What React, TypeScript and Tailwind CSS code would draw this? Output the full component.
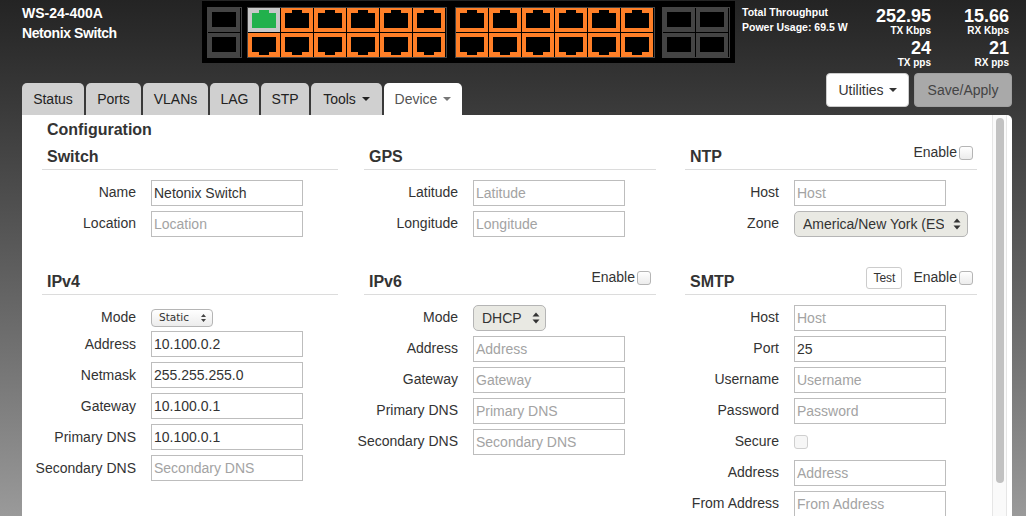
import React from 'react';

const ORANGE = '#ff7f27';
const GREEN = '#22b14c';

function Port({ bottom, active }: { bottom?: boolean; active?: boolean }) {
  const pts = bottom
    ? '4,4 28,4 28,19 21,19 21,22 11,22 11,19 4,19'
    : '4,5 11,5 11,2 21,2 21,5 28,5 28,20 4,20';
  return (
    <svg width="33" height="24" viewBox="0 0 33 24" className="block">
      <rect x="0" y="0" width="32" height="24" fill={active ? '#c8c8c8' : ORANGE} />
      <polygon points={pts} fill={active ? GREEN : '#000'} />
    </svg>
  );
}

function Sfp() {
  return (
    <svg width="33" height="24" viewBox="0 0 33 24" className="block">
      <rect x="0" y="0" width="32" height="24" fill="#444" />
      <rect x="4" y="4" width="24" height="15" fill="#000" />
    </svg>
  );
}

function PortGroup({ count, first, kind }: { count: number; first?: boolean; kind: 'rj' | 'sfp' }) {
  const idx = Array.from({ length: count }, (_, i) => i);
  return (
    <div className="border border-[#444] flex flex-col gap-px">
      <div className="flex">
        {idx.map((i) => (kind === 'sfp' ? <Sfp key={i} /> : <Port key={i} active={first && i === 0} />))}
      </div>
      <div className="flex">
        {idx.map((i) => (kind === 'sfp' ? <Sfp key={i} /> : <Port key={i} bottom />))}
      </div>
    </div>
  );
}

function Field({ label, value, placeholder, flat }: { label: string; value?: string; placeholder?: string; flat?: boolean }) {
  return (
    <Row label={label} flat={flat}>
      <div className={`h-[26px] w-[152px] border border-[#bdbdbd] bg-white px-[2px] leading-[25px] text-[14px] whitespace-nowrap overflow-hidden ${value ? 'text-[#333]' : 'text-[#a3a3a3]'}`}>
        {value ?? placeholder}
      </div>
    </Row>
  );
}

function Row({ label, children, cls = 'mb-[5px]', flat }: { label: string; children: React.ReactNode; cls?: string; flat?: boolean }) {
  return (
    <div className={`flex items-center ${cls}`}>
      <div className={`w-[94px] flex justify-end whitespace-nowrap text-[14px] text-[#333] ${flat ? '' : '-translate-y-px'}`}>{label}</div>
      <div className="ml-[15px]">{children}</div>
    </div>
  );
}

function Enable({ cls = '' }: { cls?: string }) {
  return (
    <div className={`flex items-center gap-[2px] text-[14px] text-[#333] ${cls}`}>
      <span>Enable</span>
      <span className="w-[14px] h-[14px] rounded-[3px] border border-[#b5b5b5] bg-gradient-to-b from-[#ffffff] to-[#ececec]" />
    </div>
  );
}

function Section({ title, right, cls = '', children }: { title: string; right?: React.ReactNode; cls?: string; children: React.ReactNode }) {
  return (
    <div className={`min-w-0 ${cls}`}>
      <div className="h-[29px] border-b border-[#dcdcdc] flex justify-between pr-[4px]">
        <span className="ml-[5px] text-[16px] font-bold text-[#333] leading-[25px] pt-[3px]">{title}</span>
        {right && <div className="flex items-start gap-[11px] mt-[1px]">{right}</div>}
      </div>
      <div className="pt-[10px]">{children}</div>
    </div>
  );
}

function Tab({ label, caret, active, w }: { label: string; caret?: boolean; active?: boolean; w: string }) {
  return (
    <div className={`${w} h-[32px] rounded-t-[5px] flex items-center justify-center gap-[6px] text-[14px] ${active ? 'bg-white text-[#555]' : 'bg-[#d0d0d0] text-[#222]'}`}>
      <span>{label}</span>
      {caret && <span className={`w-0 h-0 border-x-[4px] border-x-transparent border-t-[4px] ${active ? 'border-t-[#777]' : 'border-t-[#222]'}`} />}
    </div>
  );
}

function Stat({ value, unit, w }: { value: string; unit: string; w: string }) {
  return (
    <div className={`${w} text-right text-white`}>
      <div className="text-[18px] font-bold leading-[17px]">{value}</div>
      <div className="text-[10px] leading-[12px] font-bold">{unit}</div>
    </div>
  );
}

export default function App() {
  return (
    <div className="h-[516px] w-[1026px] overflow-hidden bg-gradient-to-b from-[#242424] to-[#9a9a9a] font-['Liberation_Sans',Arial,sans-serif]">
      <div className="h-[73px] flex items-start">
        <div className="w-[202px] pl-[22px] pt-[3px] text-white text-[14px] font-bold">
          <div className="leading-[20px]">WS-24-400A</div>
          <div className="leading-[20px] tracking-[-0.4px]">Netonix Switch</div>
        </div>
        <div className="mt-px h-[62px] w-[533px] bg-black pt-[6px] pl-[5px] flex items-start">
          <PortGroup count={1} kind="sfp" />
          <div className="ml-[5px]"><PortGroup count={6} kind="rj" first /></div>
          <div className="ml-[8px]"><PortGroup count={6} kind="rj" /></div>
          <div className="ml-[7px]"><PortGroup count={2} kind="sfp" /></div>
        </div>
        <div className="ml-[7px] pt-[5px] w-[127px] text-white text-[10.5px] font-bold">
          <div className="leading-[15px]">Total Throughput</div>
          <div className="leading-[15px]">Power Usage: 69.5 W</div>
        </div>
        <div className="pt-[8px] ml-[2px] flex flex-col">
          <div className="flex">
            <Stat value="252.95" unit="TX Kbps" w="w-[60px]" />
            <Stat value="15.66" unit="RX Kbps" w="w-[78px]" />
          </div>
          <div className="flex mt-[3px]">
            <Stat value="24" unit="TX pps" w="w-[60px]" />
            <Stat value="21" unit="RX pps" w="w-[78px]" />
          </div>
        </div>
      </div>

      <div className="h-[42px] flex items-start pl-[22px] pr-[14px]">
        <div className="mt-[10px] flex gap-[2px]">
          <Tab label="Status" w="w-[62px]" />
          <Tab label="Ports" w="w-[55px]" />
          <Tab label="VLANs" w="w-[65px]" />
          <Tab label="LAG" w="w-[49px]" />
          <Tab label="STP" w="w-[48px]" />
          <Tab label="Tools" caret w="w-[71px]" />
          <Tab label="Device" caret active w="w-[78px]" />
        </div>
        <div className="ml-auto flex gap-[5px]">
          <div className="w-[83px] h-[34px] rounded-[4px] bg-white border border-[#ccc] text-[#333] text-[14px] flex items-center justify-center gap-[5px]">
            <span>Utilities</span>
            <span className="w-0 h-0 border-x-[4px] border-x-transparent border-t-[4px] border-t-[#333]" />
          </div>
          <div className="w-[98px] h-[34px] rounded-[4px] bg-[#a9a9a9] border border-[#a0a0a0] text-[#444] text-[14px] flex items-center justify-center">Save/Apply</div>
        </div>
      </div>

      <div className="ml-[22px] w-[990px] h-[401px] bg-white rounded-tr-[5px] flex overflow-hidden">
        <div className="w-[970px] pl-[20px] flex-none">
          <div className="pl-[5px] pt-[5px] text-[16px] font-bold text-[#333] leading-[20px] h-[25px]">Configuration</div>
          <div className="grid grid-cols-[322px_321px_292px] grid-rows-[125px_auto] mt-[1px]">
            <Section title="Switch" cls="mr-[26px]">
              <Field label="Name" value="Netonix Switch" />
              <Field label="Location" placeholder="Location" />
            </Section>
            <Section title="GPS" cls="mr-[29px]">
              <Field label="Latitude" placeholder="Latitude" />
              <Field label="Longitude" placeholder="Longitude" />
            </Section>
            <Section title="NTP" right={<Enable />}>
              <Field label="Host" placeholder="Host" />
              <Row label="Zone">
                <div className="w-[174px] h-[26px] rounded-[5px] border border-[#b5b5b5] bg-[#e9e9e3] pl-[8px] pr-[6px] flex items-center justify-between text-[14px] text-[#333] whitespace-nowrap">
                  <span className="w-[141px] overflow-hidden">America/New York (ES</span>
                  <svg width="8" height="12" viewBox="0 0 8 12"><path d="M4 0.5 7.5 4.5 0.5 4.5Z M4 11.5 7.5 7.5 0.5 7.5Z" fill="#333" /></svg>
                </div>
              </Row>
            </Section>

            <Section title="IPv4" cls="mr-[26px]">
              <Row label="Mode" cls="h-[26px]">
                <div className="w-[62px] h-[18px] rounded-[4px] border border-[#b5b5b5] bg-gradient-to-b from-[#ffffff] to-[#ececec] pl-[7px] pr-[6px] flex items-center justify-between text-[10.5px] text-[#333] font-['DejaVu_Sans',sans-serif]">
                  <span>Static</span>
                  <svg width="5" height="8" viewBox="0 0 5 8"><path d="M2.5 0 5 3 0 3Z M2.5 8 5 5 0 5Z" fill="#444" /></svg>
                </div>
              </Row>
              <Field flat label="Address" value="10.100.0.2" />
              <Field flat label="Netmask" value="255.255.255.0" />
              <Field flat label="Gateway" value="10.100.0.1" />
              <Field flat label="Primary DNS" value="10.100.0.1" />
              <Field flat label="Secondary DNS" placeholder="Secondary DNS" />
            </Section>
            <Section title="IPv6" cls="mr-[29px]" right={<Enable cls="mr-[1px]" />}>
              <Row label="Mode">
                <div className="w-[73px] h-[26px] rounded-[5px] border border-[#b5b5b5] bg-[#e9e9e3] pl-[8px] pr-[5px] flex items-center justify-between text-[14px] text-[#333]">
                  <span>DHCP</span>
                  <svg width="8" height="12" viewBox="0 0 8 12"><path d="M4 0.5 7.5 4.5 0.5 4.5Z M4 11.5 7.5 7.5 0.5 7.5Z" fill="#333" /></svg>
                </div>
              </Row>
              <Field label="Address" placeholder="Address" />
              <Field label="Gateway" placeholder="Gateway" />
              <Field label="Primary DNS" placeholder="Primary DNS" />
              <Field label="Secondary DNS" placeholder="Secondary DNS" />
            </Section>
            <Section
              title="SMTP"
              right={
                <>
                  <div className="w-[36px] h-[22px] rounded-[3px] border border-[#ccc] bg-white text-[12px] text-[#333] flex items-center justify-center">Test</div>
                  <Enable />
                </>
              }
            >
              <Field label="Host" placeholder="Host" />
              <Field label="Port" value="25" />
              <Field label="Username" placeholder="Username" />
              <Field label="Password" placeholder="Password" />
              <Row label="Secure">
                <div className="h-[26px] flex items-center">
                  <span className="w-[14px] h-[14px] rounded-[3px] border border-[#cfcfcf] bg-[#f6f6f6]" />
                </div>
              </Row>
              <Field label="Address" placeholder="Address" />
              <Field label="From Address" placeholder="From Address" />
            </Section>
          </div>
        </div>
        <div className="w-[15px] flex-none border-x border-[#e6e6e6] bg-[#fafafa] pl-[3px] pt-[3px]">
          <div className="w-[8px] h-[365px] rounded-[4px] bg-[#c2c2c2]" />
        </div>
      </div>
    </div>
  );
}
